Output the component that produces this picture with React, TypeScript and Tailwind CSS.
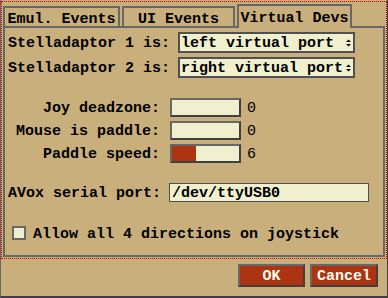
import React from "react";

function UpDown() {
  return (
    <svg width="5" height="8" viewBox="0 0 5 8" className="shrink-0">
      <polygon points="0,3 2.5,0.5 5,3" fill="#000" />
      <polygon points="0,5 5,5 2.5,7.5" fill="#000" />
    </svg>
  );
}

function Select({ label, value }: { label: string; value: string }) {
  return (
    <div className="flex items-center h-[21px]">
      <div className="w-[173px] pl-[3px] pt-[2px]">{label}</div>
      <div className="w-[177px] h-[21px] bg-[#f0f0cf] border-2 border-[#505050] flex items-center justify-between pl-[1px] pr-[2px] pt-[1px] overflow-hidden">
        <span className="whitespace-nowrap">{value}</span>
        <UpDown />
      </div>
    </div>
  );
}

function SliderRow({ label, value, fill }: { label: string; value: string; fill: number }) {
  return (
    <div className="flex items-center h-[19px]">
      <div className="w-[155px] text-right pt-[2px]">{label}</div>
      <div className="ml-[10px] w-[71px] h-[19px] bg-[#f0f0cf] border-2 border-t-[#686868] border-l-[#686868] border-b-[#404040] border-r-[#404040] flex">
        {fill > 0 && <div className="h-full bg-[#ac3410]" style={{ width: fill }} />}
      </div>
      <div className="ml-[6px] font-normal pt-[2px]">{value}</div>
    </div>
  );
}

export default function App() {
  return (
    <div className="w-[388px] h-[298px] bg-[#c9af7c] border-l border-r border-b-2 border-l-[#686868] border-r-[#404040] border-b-[#404040] font-['Liberation_Mono',monospace] font-bold text-[15px] leading-none text-black flex flex-col">
      {/* tab widget with focus rectangle */}
      <div className="mt-[1px] h-[258px] border border-dotted border-[#c80000] flex flex-col">
        <div className="mt-[2px] pl-[1px] h-[24px] flex items-end gap-[2px]">
          <div className="w-[117px] h-[22px] border-2 border-b-0 border-[#686868] flex justify-center pt-[4px]">
            Emul. Events
          </div>
          <div className="w-[113px] h-[22px] border-2 border-b-0 border-[#686868] flex justify-center pt-[4px]">
            UI Events
          </div>
          <div className="relative z-10 w-[115px] h-[24px] bg-[#c9af7c] border-2 border-b-0 border-[#686868] flex justify-center pt-[5px]">
            Virtual Devs
          </div>
        </div>
        <div className="-mt-[2px] ml-[1px] w-[382px] h-[231px] border-2 border-[#686868] flex flex-col">
          <div className="mt-[4px]">
            <Select label="Stelladaptor 1 is:" value="left virtual port" />
          </div>
          <div className="mt-[4px]">
            <Select label="Stelladaptor 2 is:" value="right virtual port" />
          </div>
          <div className="mt-[20px] flex flex-col gap-[4px]">
            <SliderRow label="Joy deadzone:" value="0" fill={0} />
            <SliderRow label="Mouse is paddle:" value="0" fill={0} />
            <SliderRow label="Paddle speed:" value="6" fill={24} />
          </div>
          <div className="mt-[20px] flex items-center h-[19px]">
            <div className="w-[164px] pl-[3px] pt-[2px]">AVox serial port:</div>
            <div className="w-[200px] h-[19px] bg-[#f0f0cf] border border-[#505050] flex items-center pl-[2px] pt-[2px]">
              /dev/ttyUSB0
            </div>
          </div>
          <div className="mt-[24px] flex items-center pl-[7px] h-[14px]">
            <div className="w-[14px] h-[14px] bg-[#f0f0cf] border-2 border-[#686868]" />
            <div className="ml-[7px] pt-[2px]">Allow all 4 directions on joystick</div>
          </div>
        </div>
      </div>
      <div className="mt-[5px] flex justify-end gap-[5px] pr-[9px]">
        <button className="w-[67px] h-[23px] bg-[#ac3410] text-[#fffff0] border-2 border-t-[#686868] border-l-[#686868] border-b-[#404040] border-r-[#404040] flex items-center justify-center pt-[2px]">
          OK
        </button>
        <button className="w-[68px] h-[23px] bg-[#ac3410] text-[#fffff0] border-2 border-t-[#686868] border-l-[#686868] border-b-[#404040] border-r-[#404040] flex items-center justify-center pt-[2px]">
          Cancel
        </button>
      </div>
    </div>
  );
}
